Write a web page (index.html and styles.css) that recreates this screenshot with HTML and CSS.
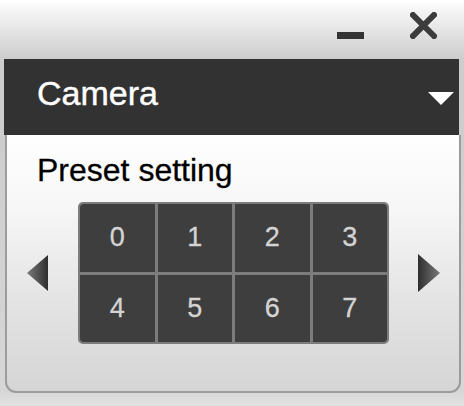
FILE: index.html
```html
<!DOCTYPE html>
<html>
<head>
<meta charset="utf-8">
<link rel="stylesheet" href="styles.css">
</head>
<body>
<div class="window">
  <div class="titlebar">
    <div class="minimize"></div>
    <svg class="close" width="27" height="27" viewBox="0 0 27 27">
      <path d="M3 3 L24 24 M24 3 L3 24" stroke="#3c3c3c" stroke-width="6" stroke-linecap="square"/>
    </svg>
  </div>
  <div class="header">
    <span class="header-title">Camera</span>
    <svg class="dropdown" width="26" height="13" viewBox="0 0 26 13">
      <path d="M0 0 H26 L13 13 Z" fill="#ffffff"/>
    </svg>
  </div>
  <div class="panel">
    <div class="panel-title">Preset setting</div>
    <div class="preset-row">
      <svg class="arrow" width="21" height="36" viewBox="0 0 21 36">
        <defs>
          <linearGradient id="gl" x1="0" y1="0" x2="1" y2="0">
            <stop offset="0" stop-color="#7a7a7a"/>
            <stop offset="1" stop-color="#2e2e2e"/>
          </linearGradient>
        </defs>
        <path d="M21 0 V36 L0 18 Z" fill="url(#gl)"/>
      </svg>
      <div class="preset-grid">
        <div class="cell">0</div>
        <div class="cell">1</div>
        <div class="cell">2</div>
        <div class="cell">3</div>
        <div class="cell">4</div>
        <div class="cell">5</div>
        <div class="cell">6</div>
        <div class="cell">7</div>
      </div>
      <svg class="arrow" width="22" height="38" viewBox="0 0 22 38">
        <defs>
          <linearGradient id="gr" x1="0" y1="0" x2="1" y2="0">
            <stop offset="0" stop-color="#2e2e2e"/>
            <stop offset="1" stop-color="#7a7a7a"/>
          </linearGradient>
        </defs>
        <path d="M0 0 V38 L22 19 Z" fill="url(#gr)"/>
      </svg>
    </div>
  </div>
</div>
</body>
</html>
```
FILE: styles.css
```css
html, body {
  margin: 0;
  padding: 0;
}
body {
  width: 464px;
  height: 406px;
  overflow: hidden;
  font-family: "Liberation Sans", Arial, sans-serif;
}
.window {
  width: 464px;
  height: 406px;
  background: linear-gradient(to bottom, #ffffff 0px, #f2f2f2 14px, #d6d6d6 48px, #cdcdcd 58px, #cccccc 100px, #d6d6d6 390px, #e2e2e2 406px);
  display: flex;
  flex-direction: column;
}
.titlebar {
  height: 59px;
  box-sizing: border-box;
  display: flex;
  justify-content: flex-end;
  align-items: flex-start;
  padding-top: 12px;
  padding-right: 27px;
}
.minimize {
  width: 27px;
  height: 7px;
  background: #333333;
  margin-top: 20px;
  margin-right: 46px;
}
.close {
  display: block;
}
.header {
  margin-left: 4px;
  width: 455px;
  height: 76px;
  box-sizing: border-box;
  background: #323232;
  display: flex;
  justify-content: space-between;
  align-items: flex-start;
  padding: 17px 5px 0 33px;
}
.header-title {
  color: #ffffff;
  font-size: 34px;
  line-height: 34px;
  -webkit-text-stroke: 0.4px #ffffff;
}
.dropdown {
  display: block;
  margin-top: 16px;
}
.panel {
  margin-left: 5px;
  width: 456px;
  height: 258px;
  box-sizing: border-box;
  border: 2px solid #9c9c9c;
  border-top: none;
  border-radius: 0 0 11px 11px;
  background: linear-gradient(to bottom, #ffffff 0%, #f6f6f6 30%, #e6e6e6 60%, #d5d5d5 100%);
  padding-top: 19px;
}
.panel-title {
  color: #000000;
  font-size: 32px;
  line-height: 32px;
  padding-left: 30px;
  -webkit-text-stroke: 0.3px #000000;
}
.preset-row {
  display: flex;
  align-items: center;
  margin-top: 16px;
  padding-left: 20px;
}
.arrow {
  display: block;
  flex: none;
}
.preset-grid {
  margin: 0 29px 0 30px;
  width: 311px;
  height: 142px;
  box-sizing: border-box;
  background: #7c7c7c;
  border-radius: 5px;
  padding: 2px;
  display: grid;
  grid-template-columns: repeat(4, 1fr);
  grid-template-rows: repeat(2, 1fr);
  gap: 3px;
}
.cell {
  background: #3e3e3e;
  color: #d4d4d4;
  font-size: 27px;
  -webkit-text-stroke: 0.3px #d4d4d4;
  display: flex;
  align-items: center;
  justify-content: center;
}
.cell:first-child { border-top-left-radius: 4px; }
.cell:nth-child(4) { border-top-right-radius: 4px; }
.cell:nth-child(5) { border-bottom-left-radius: 4px; }
.cell:nth-child(8) { border-bottom-right-radius: 4px; }
```
